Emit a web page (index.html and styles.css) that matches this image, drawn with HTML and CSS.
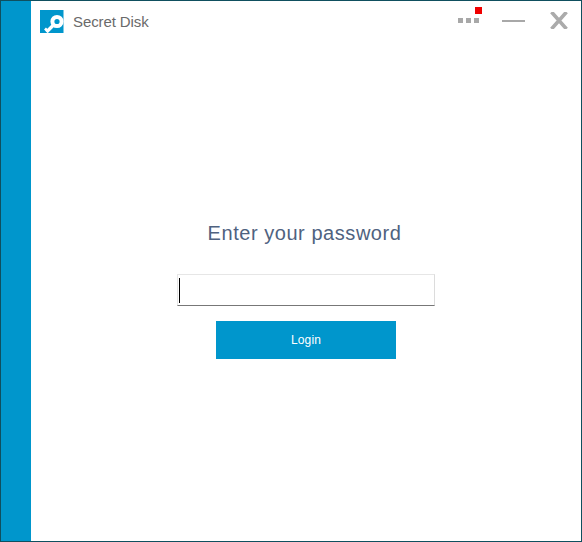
FILE: index.html
```html
<!DOCTYPE html>
<html lang="en">
<head>
    <meta charset="UTF-8">
    <meta name="viewport" content="width=device-width, initial-scale=1.0">
    <title>Secret Disk</title>
    <link rel="stylesheet" href="styles.css">
</head>
<body>
    <div class="window">
        <div class="sidebar"></div>
        <div class="main">
            <div class="titlebar">
                <svg class="logo" width="24" height="24" viewBox="0 0 24 24">
                    <rect width="23.5" height="23" fill="#0096cc"/>
                    <circle cx="17" cy="11.5" r="4.6" fill="none" stroke="#fff" stroke-width="4"/>
                    <path d="M13.5 15 L6.5 22" fill="none" stroke="#fff" stroke-width="3.4"/>
                    <path d="M5 18.5 L8 21.5" fill="none" stroke="#fff" stroke-width="2.6"/>
                </svg>
                <span class="app-name">Secret Disk</span>
                <div class="controls">
                    <div class="menu-btn">
                        <span class="dot"></span>
                        <span class="dot"></span>
                        <span class="dot"></span>
                        <span class="badge"></span>
                    </div>
                    <div class="min-btn"></div>
                    <svg class="close-btn" width="18" height="17" viewBox="0 0 18 17">
                        <path d="M1.5 0 L16.5 17 M16.5 0 L1.5 17" fill="none" stroke="#ababab" stroke-width="3.6"/>
                    </svg>
                </div>
            </div>
            <div class="content">
                <h1>Enter your password</h1>
                <div class="field"><span class="caret"></span></div>
                <button class="login">Login</button>
            </div>
        </div>
    </div>
</body>
</html>
```

FILE: styles.css
```css
html, body {
    margin: 0;
    padding: 0;
    background-color: #fff;
}
.window {
    box-sizing: border-box;
    width: 582px;
    height: 542px;
    display: flex;
    border: 1px solid #0f4f5f;
    font-family: "Liberation Sans", Arial, sans-serif;
}
.sidebar {
    width: 30px;
    background-color: #0096cc;
}
.main {
    flex: 1;
    display: flex;
    flex-direction: column;
}
.titlebar {
    display: flex;
    align-items: center;
    height: 41px;
    padding: 0 13px 0 9px;
}
.logo {
    flex: none;
}
.app-name {
    margin-left: 9px;
    font-size: 15px;
    letter-spacing: -0.1px;
    color: #6a6a6a;
}
.controls {
    margin-left: auto;
    display: flex;
    align-items: center;
}
.menu-btn {
    position: relative;
    display: flex;
    gap: 3px;
    margin-top: -2px;
}
.dot {
    width: 5px;
    height: 5px;
    background-color: #a8a8a8;
}
.badge {
    position: absolute;
    top: -11px;
    right: -3px;
    width: 7px;
    height: 7px;
    background-color: #f00000;
}
.min-btn {
    width: 23px;
    height: 2px;
    margin-left: 23px;
    margin-top: -1px;
    background-color: #a8a8a8;
}
.close-btn {
    margin-left: 25px;
    margin-top: -2px;
}
.content {
    display: flex;
    flex-direction: column;
    align-items: center;
    padding-top: 178px;
}
h1 {
    margin: 0 0 28px 0;
    padding-right: 3px;
    font-size: 20px;
    font-weight: normal;
    line-height: 26px;
    letter-spacing: 0.55px;
    color: #4f6280;
}
.field {
    box-sizing: border-box;
    width: 258px;
    height: 32px;
    display: flex;
    align-items: center;
    padding-left: 1px;
    background-color: #fff;
    border: 1px solid #e6e6e6;
    border-bottom: 1px solid #777;
    border-right-color: #dcdcdc;
}
.caret {
    width: 1px;
    height: 25px;
    background-color: #000;
}
.login {
    width: 180px;
    height: 38px;
    margin-top: 15px;
    border: none;
    background-color: #0096cc;
    color: #fff;
    font-family: inherit;
    font-size: 12px;
    letter-spacing: 0.1px;
    cursor: pointer;
}
```
